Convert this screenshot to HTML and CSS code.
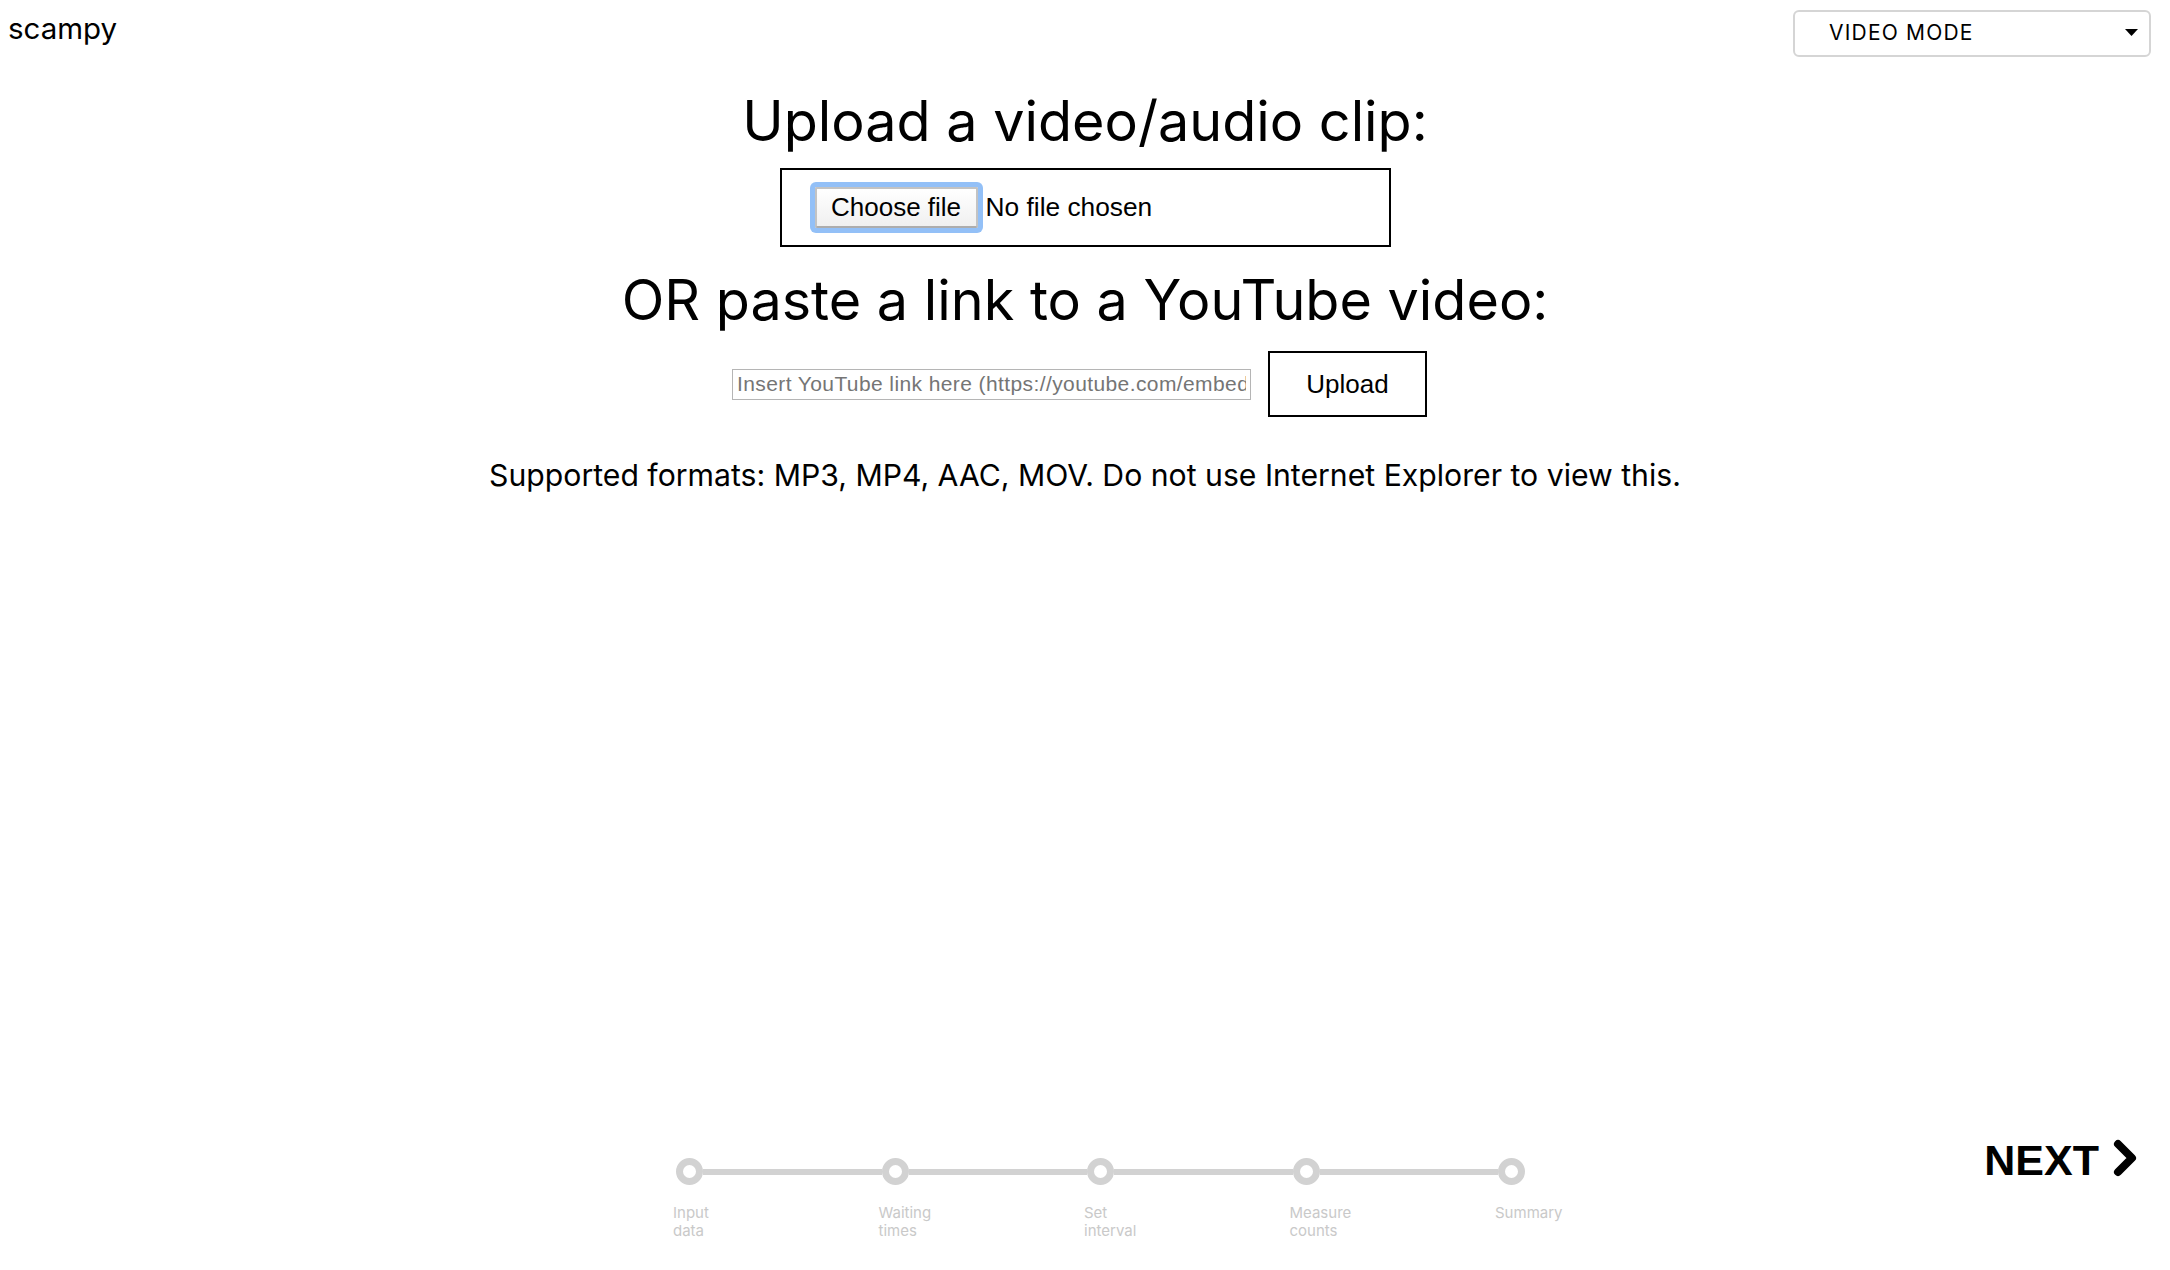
FILE: index.html
```html
<!DOCTYPE html>
<html lang="en">
<head>
<meta charset="utf-8">
<title>scampy</title>
<link rel="stylesheet" href="styles.css">
</head>
<body>
<div class="page">
  <header class="topbar">
    <div class="brand">scampy</div>
    <div class="mode-select">
      <span class="mode-text">VIDEO MODE</span>
      <svg class="mode-caret" width="13" height="7" viewBox="0 0 13 7"><path d="M0 0 H13 L6.5 7 Z" fill="#000"/></svg>
    </div>
  </header>

  <main class="content">
    <h1 class="title">Upload a video/audio clip:</h1>
    <div class="file-box">
      <label class="file-picker">
        <input class="file-input" type="file" accept=".mp3,.mp4,.aac,.mov">
        <span class="file-button">Choose file</span>
        <span class="file-status">No file chosen</span>
      </label>
    </div>
    <h2 class="title">OR paste a link to a YouTube video:</h2>
    <div class="link-row">
      <input class="link-input" type="text" placeholder="Insert YouTube link here (https://youtube.com/embed/...)">
      <button class="upload-button" type="button">Upload</button>
    </div>
    <p class="formats">Supported formats: MP3, MP4, AAC, MOV. Do not use Internet Explorer to view this.</p>
  </main>

  <footer class="footer">
    <div class="stepper">
      <div class="step"><div class="rail"><span class="dot"></span><span class="line"></span></div><span class="label">Input<br>data</span></div>
      <div class="step"><div class="rail"><span class="dot"></span><span class="line"></span></div><span class="label">Waiting<br>times</span></div>
      <div class="step"><div class="rail"><span class="dot"></span><span class="line"></span></div><span class="label">Set<br>interval</span></div>
      <div class="step"><div class="rail"><span class="dot"></span><span class="line"></span></div><span class="label">Measure<br>counts</span></div>
      <div class="step step-last"><div class="rail"><span class="dot"></span></div><span class="label">Summary</span></div>
    </div>
    <a class="next" href="#"><span class="next-text">NEXT</span>
      <svg class="next-chevron" width="25" height="38" viewBox="0 0 25 38"><path d="M5 5 L19 19 L5 33" fill="none" stroke="#000" stroke-width="8" stroke-linecap="round" stroke-linejoin="round"/></svg>
    </a>
  </footer>
</div>
</body>
</html>
```

FILE: styles.css
```css
html, body {
  margin: 0;
  padding: 0;
  background: #fff;
}

body {
  font-family: Inter, "Liberation Sans", sans-serif;
  color: #000;
}

.page {
  height: 1270px;
  display: flex;
  flex-direction: column;
}

.topbar {
  display: flex;
  justify-content: space-between;
  align-items: flex-start;
  padding: 10px 19px 0 8px;
}

.brand {
  font-size: 29.5px;
  line-height: 36px;
}

.mode-select {
  box-sizing: border-box;
  width: 358px;
  height: 47px;
  border: 2px solid #d5d5d5;
  border-radius: 6px;
  display: flex;
  align-items: center;
  padding: 0 11px 2px 34px;
  font-size: 21px;
  letter-spacing: 1.2px;
}

.mode-caret {
  margin-left: auto;
}

.content {
  display: flex;
  flex-direction: column;
  align-items: center;
}

.title {
  margin: 0;
  font-size: 55.7px;
  font-weight: 400;
  line-height: 68px;
}

h1.title {
  margin-top: 30px;
}

h2.title {
  margin-top: 19px;
}

.file-box {
  box-sizing: border-box;
  width: 611px;
  height: 79px;
  margin-top: 13px;
  border: 2px solid #000;
  display: flex;
  align-items: center;
  padding-left: 33px;
}

.file-picker {
  display: flex;
  align-items: center;
  cursor: pointer;
}

.file-input {
  display: none;
}

.file-button {
  box-sizing: border-box;
  height: 41px;
  padding: 0 14.5px;
  display: flex;
  align-items: center;
  font-family: "Liberation Sans", Arial, sans-serif;
  font-size: 26px;
  background: linear-gradient(#ffffff, #f0f0f0);
  border: 2px solid #c3c3c3;
  border-bottom-color: #adadad;
  border-radius: 2px;
  box-shadow: 0 0 0 5px #93c0f7;
}

.file-status {
  margin-left: 8px;
  font-family: "Liberation Sans", Arial, sans-serif;
  font-size: 26.3px;
}

.link-row {
  display: flex;
  align-items: center;
  gap: 17px;
  margin-top: 17px;
  padding-right: 11px;
}

.link-input {
  box-sizing: border-box;
  width: 519px;
  height: 31px;
  margin: 0;
  padding: 0 4px;
  border: 1px solid #b5b5b5;
  border-radius: 0;
  font-family: "Liberation Sans", Arial, sans-serif;
  font-size: 21px;
  letter-spacing: 0.4px;
  color: #000;
  outline: none;
}

.link-input::placeholder {
  color: #757575;
}

.upload-button {
  box-sizing: border-box;
  width: 159px;
  height: 66px;
  margin: 0;
  padding: 0;
  border: 2px solid #000;
  border-radius: 0;
  background: #fff;
  font-family: "Liberation Sans", Arial, sans-serif;
  font-size: 26px;
  color: #000;
}

.formats {
  margin: 40px 0 0;
  font-size: 30.2px;
  line-height: 36px;
}

.footer {
  margin-top: auto;
  height: 140px;
  display: flex;
  align-items: flex-start;
  padding-left: 676px;
  padding-right: 32px;
}

.stepper {
  display: flex;
  margin-top: 28px;
}

.step {
  width: 205.5px;
  display: flex;
  flex-direction: column;
}

.step-last {
  width: auto;
}

.rail {
  display: flex;
  align-items: center;
  height: 27px;
}

.dot {
  box-sizing: border-box;
  width: 27px;
  height: 27px;
  flex: none;
  border: 7px solid #d2d2d2;
  border-radius: 50%;
  background: #fff;
}

.line {
  flex: 1;
  height: 6px;
  background: #d2d2d2;
}

.label {
  margin: 19px 0 0 -3px;
  font-size: 15px;
  line-height: 18px;
  color: #c9c9c9;
}

.next {
  margin-left: auto;
  margin-top: 5px;
  display: flex;
  align-items: center;
  gap: 14px;
  color: #000;
  text-decoration: none;
}

.next-text {
  font-family: "Liberation Sans", Arial, sans-serif;
  font-weight: 700;
  font-size: 43px;
  line-height: 50px;
}

.next-chevron {
  margin-top: -4px;
}
```
